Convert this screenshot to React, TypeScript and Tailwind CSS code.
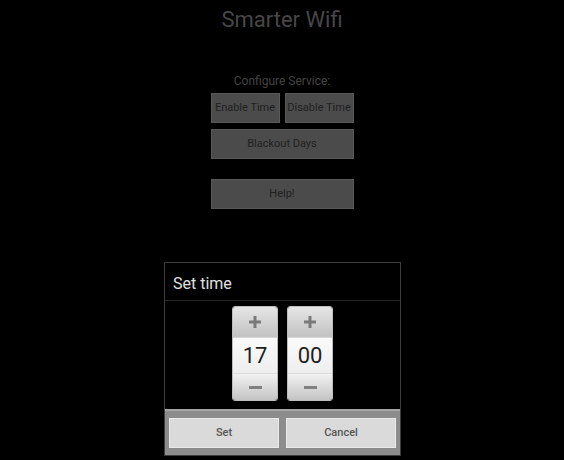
import React from "react";

function Plus() {
  return (
    <svg width="12" height="12" viewBox="0 0 12 12">
      <rect x="0" y="4.5" width="12" height="3" fill="#7a7a7a" />
      <rect x="4.5" y="0" width="3" height="12" fill="#7a7a7a" />
    </svg>
  );
}

function Minus() {
  return (
    <svg width="13" height="3" viewBox="0 0 13 3">
      <rect x="0" y="0" width="13" height="3" fill="#808080" />
    </svg>
  );
}

function Column({ value }: { value: string }) {
  return (
    <div className="flex h-[95px] w-[46px] flex-col overflow-hidden rounded-[3px] border border-[#bdbdbd]">
      <div className="flex h-[31px] items-center justify-center border-b border-[#d6d6d6] bg-gradient-to-b from-[#e6e6e6] to-[#c2c2c2]">
        <Plus />
      </div>
      <div className="flex h-[35px] items-center justify-center bg-gradient-to-b from-[#fafafa] to-[#eeeeee] text-[22px] leading-none text-[#1e1e1e]">
        {value}
      </div>
      <div className="flex flex-1 items-center justify-center border-t border-[#dcdcdc] bg-gradient-to-b from-[#f2f2f2] to-[#c4c4c4]">
        <Minus />
      </div>
    </div>
  );
}

function DarkButton({ label, className }: { label: string; className?: string }) {
  return (
    <div
      className={
        "flex h-[30px] items-center justify-center border border-[#585858] bg-[#4b4b4b] text-[11px] text-[#1f1f1f] " +
        (className ?? "")
      }
    >
      {label}
    </div>
  );
}

export default function App() {
  return (
    <div
      className="relative h-[460px] w-[564px] overflow-hidden bg-black"
      style={{ fontFamily: "Roboto, 'Noto Sans', sans-serif" }}
    >
      <div className="flex flex-col items-center">
        <div className="pt-[7px] text-[22px] leading-[26px] text-[#474747]">Smarter Wifi</div>
        <div className="mt-[41px] text-[12px] leading-[14px] text-[#444444]">Configure Service:</div>
        <div className="mt-[5px] flex w-[143px] flex-col">
          <div className="flex gap-[5px]">
            <DarkButton label="Enable Time" className="w-[69px]" />
            <DarkButton label="Disable Time" className="w-[69px]" />
          </div>
          <DarkButton label="Blackout Days" className="mt-[6px] w-full" />
          <DarkButton label="Help!" className="mt-[20px] w-full" />
        </div>
      </div>

      <div className="absolute left-[164px] top-[262px] flex w-[237px] flex-col border border-[#3c3c3c] bg-black">
        <div className="flex h-[37px] items-end pb-[7px] pl-[8px] text-[16px] leading-[19px] text-[#e0e0e0]">
          Set time
        </div>
        <div className="h-px bg-[#262626]" />
        <div className="flex h-[108px] justify-center gap-[9px] pt-[5px]">
          <Column value="17" />
          <Column value="00" />
        </div>
        <div className="flex h-[46px] flex-col bg-[#8c8c8c]">
          <div className="h-[2px] bg-[#a6a6a6]" />
          <div className="flex gap-[7px] px-[4px] pt-[7px]">
            <div className="flex h-[30px] flex-1 items-center justify-center border border-[#e9e9e9] bg-[#dadada] text-[11px] font-medium text-[#555555]">
              Set
            </div>
            <div className="flex h-[30px] flex-1 items-center justify-center border border-[#e9e9e9] bg-[#dadada] text-[11px] font-medium text-[#555555]">
              Cancel
            </div>
          </div>
        </div>
      </div>
    </div>
  );
}
